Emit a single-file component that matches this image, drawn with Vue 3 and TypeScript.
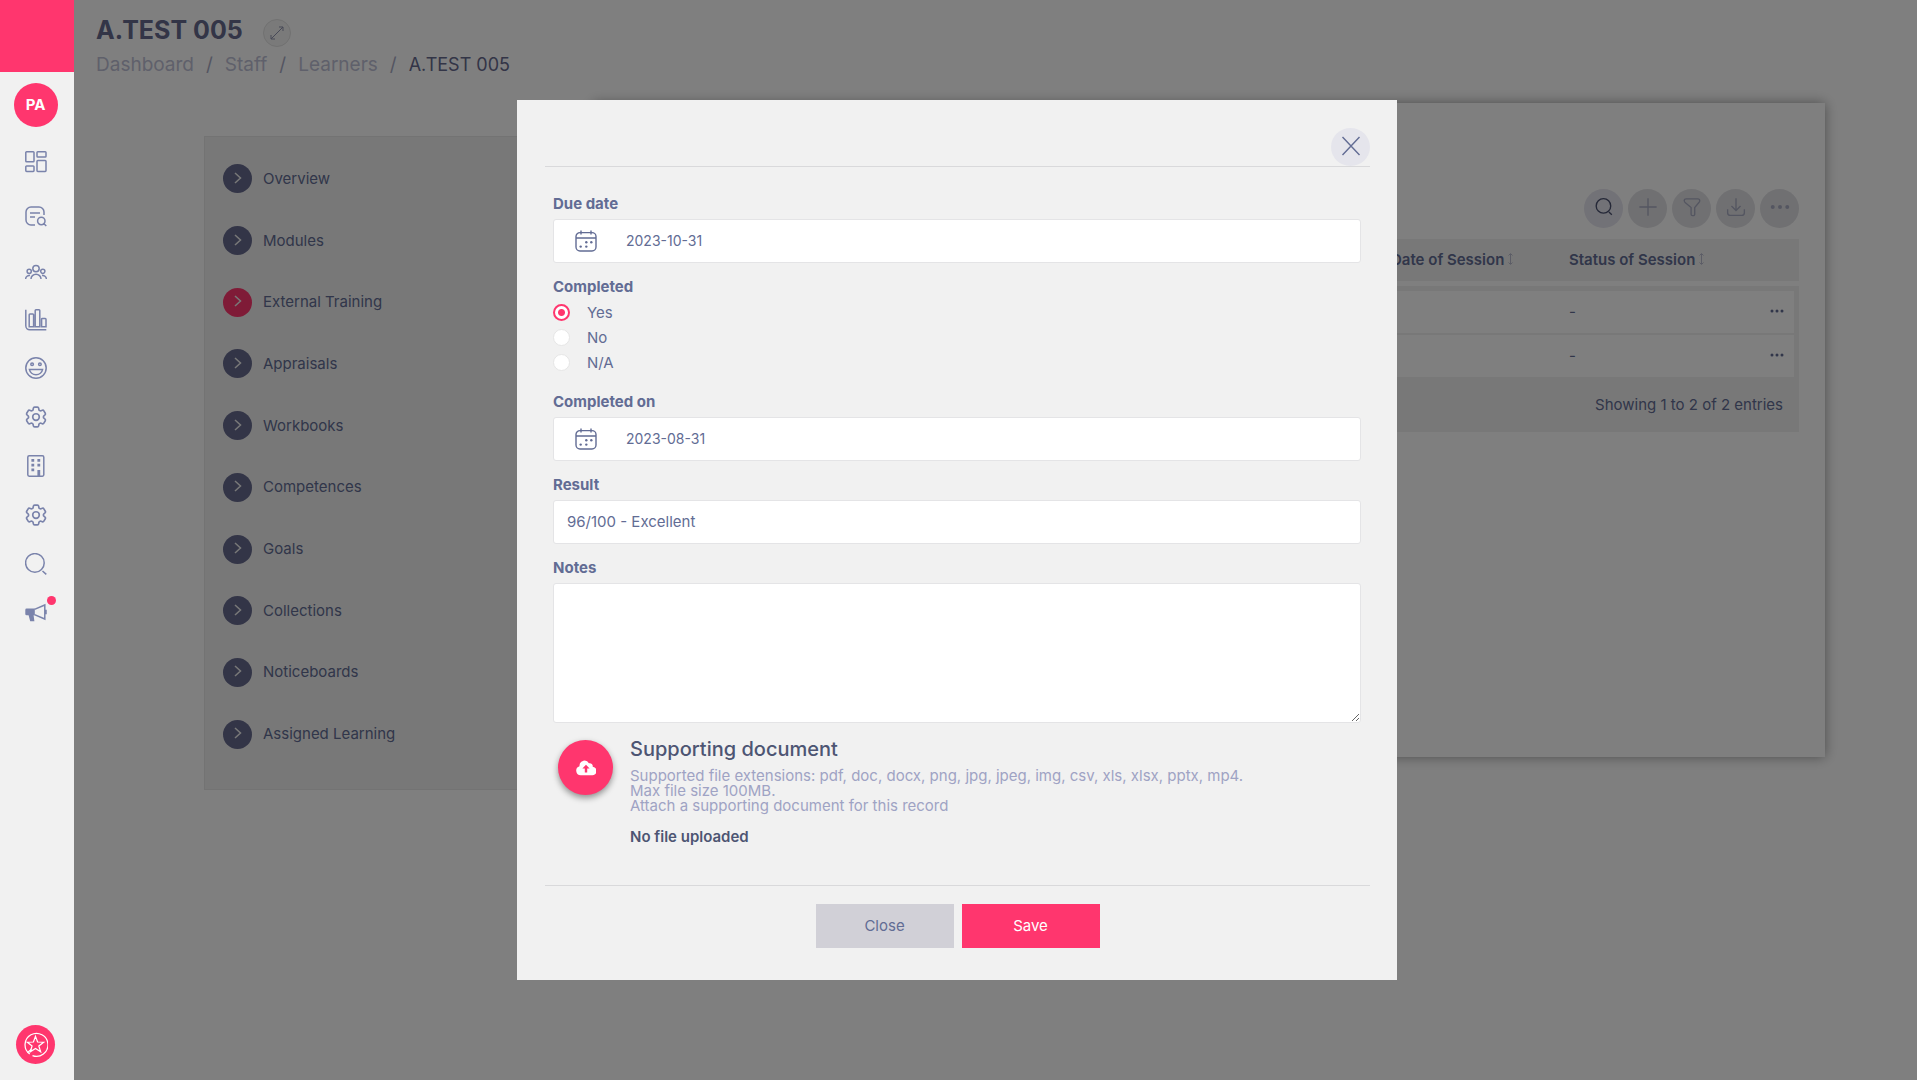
<script setup lang="ts">
import { ref } from 'vue'

interface NavIcon {
  name: string
  box: string
  strokes: string
  fills?: string
  spaced?: boolean
}

const gear =
  'M9.594 3.94c.09-.542.56-.94 1.11-.94h2.593c.55 0 1.02.398 1.11.94l.213 1.281c.063.374.313.686.645.87.074.04.147.083.22.127.325.196.72.257 1.075.124l1.217-.456a1.125 1.125 0 0 1 1.37.49l1.296 2.247a1.125 1.125 0 0 1-.26 1.431l-1.003.827c-.293.241-.438.613-.43.992a7.723 7.723 0 0 1 0 .255c-.008.378.137.75.43.991l1.004.827c.424.35.534.955.26 1.43l-1.298 2.247a1.125 1.125 0 0 1-1.369.491l-1.217-.456c-.355-.133-.75-.072-1.076.124a6.47 6.47 0 0 1-.22.128c-.331.183-.581.495-.644.869l-.213 1.281c-.09.543-.56.94-1.11.94h-2.594c-.55 0-1.019-.398-1.11-.94l-.213-1.281c-.062-.374-.312-.686-.644-.87a6.52 6.52 0 0 1-.22-.127c-.325-.196-.72-.257-1.076-.124l-1.217.456a1.125 1.125 0 0 1-1.369-.49l-1.297-2.247a1.125 1.125 0 0 1 .26-1.431l1.004-.827c.292-.24.437-.613.43-.991a6.932 6.932 0 0 1 0-.255c.007-.38-.138-.751-.43-.992l-1.004-.827a1.125 1.125 0 0 1-.26-1.43l1.297-2.247a1.125 1.125 0 0 1 1.37-.491l1.216.456c.356.133.751.072 1.076-.124.072-.044.146-.086.22-.128.332-.183.582-.495.644-.869l.214-1.28Z M15 12a3 3 0 1 1-6 0 3 3 0 0 1 6 0Z'

const navIcons: NavIcon[] = [
  {
    name: 'dashboard',
    box: '0 0 22 22',
    spaced: true,
    strokes:
      'M1.6.8h6.6a.8.8 0 0 1 .8.8v8.4a.8.8 0 0 1-.8.8H1.6a.8.8 0 0 1-.8-.8V1.6a.8.8 0 0 1 .8-.8Z M12.8.8h7.4a.8.8 0 0 1 .8.8v3.6a.8.8 0 0 1-.8.8h-7.4a.8.8 0 0 1-.8-.8V1.6a.8.8 0 0 1 .8-.8Z M1.6 15h6.6a.8.8 0 0 1 .8.8v3.8a.8.8 0 0 1-.8.8H1.6a.8.8 0 0 1-.8-.8v-3.8a.8.8 0 0 1 .8-.8Z M12.8 9.4h7.4a.8.8 0 0 1 .8.8v9.4a.8.8 0 0 1-.8.8h-7.4a.8.8 0 0 1-.8-.8v-9.4a.8.8 0 0 1 .8-.8Z'
  },
  {
    name: 'audit',
    box: '0 0 22 22',
    spaced: true,
    strokes:
      'M19 9V6a5 5 0 0 0-5-5H6a5 5 0 0 0-5 5v8a5 5 0 0 0 5 5h4 M5 7h10 M5 11h5 M20 15a3.700 3.700 0 1 1-7.400 0 3.700 3.700 0 0 1 7.400 0Z M19 17.700l2.300 2.300'
  },
  {
    name: 'people',
    box: '0 0 22 22',
    strokes:
      'M14.2 7.6a3.2 3.2 0 1 1-6.4 0 3.2 3.2 0 0 1 6.4 0Z M6.3 10.3a2.1 2.1 0 1 1-4.2 0 2.1 2.1 0 0 1 4.2 0Z M19.9 10.3a2.1 2.1 0 1 1-4.2 0 2.1 2.1 0 0 1 4.2 0Z M6 18a5 4.8 0 0 1 10 0 M.6 18a3.6 3.6 0 0 1 4.4-3.4 M21.4 18a3.6 3.6 0 0 0-4.4-3.4'
  },
  {
    name: 'reports',
    box: '0 0 22 22',
    strokes:
      'M.8.8v16a4 4 0 0 0 4 4h16.5 M5 5h2.8a.8.8 0 0 1 .8.8v12H4.2v-12a.8.8 0 0 1 .8-.8Z M11 .8h3a.8.8 0 0 1 .8.8v16.2h-4.6V1.6a.8.8 0 0 1 .8-.8Z M17.4 9.4h2.8a.8.8 0 0 1 .8.8v7.600h-4.400v-7.600a.8.8 0 0 1 .8-.8Z'
  },
  {
    name: 'feedback',
    box: '0 0 22 22',
    strokes:
      'M21.2 11a10.2 10.2 0 1 1-20.4 0 10.2 10.2 0 0 1 20.4 0Z M8.4 7.2a1.3 1.3 0 1 1-2.6 0 1.3 1.3 0 0 1 2.6 0Z M16.2 7.2a1.3 1.3 0 1 1-2.6 0 1.3 1.3 0 0 1 2.6 0Z M4.400 12.400h13.200a6.700 6.400 0 0 1-13.200 0Z'
  },
  { name: 'settings', box: '2 2 20 20', strokes: gear },
  {
    name: 'organisation',
    box: '0 0 22 22',
    strokes: 'M4.2.8h13.2a1.4 1.4 0 0 1 1.4 1.4v17.6a1.4 1.4 0 0 1-1.4 1.4H4.2a1.4 1.4 0 0 1-1.4-1.4V2.2A1.4 1.4 0 0 1 4.2.8Z',
    fills:
      'M6.4 4h2.800v2.800H6.400Z M12.400 4h2.800v2.800h-2.800Z M6.400 8.700h2.800v2.800H6.400Z M12.400 8.700h2.800v2.800h-2.800Z M6.400 13.400h2.800v2.800H6.400Z M12.400 15h2.800v6h-2.800Z'
  },
  { name: 'configuration', box: '2 2 20 20', strokes: gear },
  {
    name: 'search',
    box: '0 0 22 22',
    strokes: 'M19.2 9.9a9.3 9.3 0 1 1-18.6 0 9.3 9.3 0 0 1 18.6 0Z M17.5 18l3.8 3.4'
  },
  {
    name: 'announcements',
    box: '0 0 22 22',
    strokes: 'M9.5 7.4 19.8 3v14L9.5 12.6 M20 8.6v2.8h1v-2.8Z',
    fills: 'M1.6 6.6h8.2v6.6H8.6l.8 6H5.2l-1.6-6h-2a1.3 1.3 0 0 1-1.3-1.3v-4a1.3 1.3 0 0 1 1.3-1.3Z'
  }
]

const crumbs = ['Dashboard', 'Staff', 'Learners']

const sections = [
  'Overview',
  'Modules',
  'External Training',
  'Appraisals',
  'Workbooks',
  'Competences',
  'Goals',
  'Collections',
  'Noticeboards',
  'Assigned Learning'
]
const activeSection = ref('External Training')

const tools = [
  { name: 'Search', path: 'M18.4 9.8a8 8 0 1 1-16 0 8 8 0 0 1 16 0Z M16.4 16.4l3.200 3' },
  { name: 'Add', path: 'M11 1.500v19 M1.500 11h19' },
  {
    name: 'Filter',
    path: 'M4.500 2h13a2 2 0 0 1 2 2c0 .8-.3 1.400-.9 2L14 11.500v7.500a1.500 1.500 0 0 1-1.500 1.500h-1A1.500 1.500 0 0 1 10 19V11.500L3.400 6a2.500 2.500 0 0 1-.9-2 2 2 0 0 1 2-2Z'
  },
  { name: 'Download', path: 'M11 1.500v13 M6 9.800l5 5 5-5 M1.800 13.500v3.700a3 3 0 0 0 3 3h12.400a3 3 0 0 0 3-3v-3.700' },
  { name: 'More', path: '' }
]

const rows = ['-', '-']

const dueDate = ref('2023-10-31')
const completed = ref('Yes')
const completedOn = ref('2023-08-31')
const result = ref('96/100 - Excellent')
const notes = ref('')
const calendar =
  'M5 2.6h12a4 4 0 0 1 4 4v10.400a4 4 0 0 1-4 4H5a4 4 0 0 1-4-4V6.600a4 4 0 0 1 4-4Z M1 8h20 M6 .6v4 M16 .6v4'
const calendarDots = [
  [11.3, 12.3],
  [16.3, 12.3],
  [5.7, 16.6],
  [11.3, 16.6]
]
</script>

<template>
  <div class="app">
    <aside class="sidebar">
      <div class="brand"></div>
      <a href="#" class="avatar">PA</a>
      <nav>
        <ul class="nav-list">
          <li v-for="icon in navIcons" :key="icon.name" :class="{ spaced: icon.spaced }">
            <a href="#" class="nav-link" :aria-label="icon.name">
              <svg width="22" height="22" :viewBox="icon.box">
                <path :d="icon.strokes" fill="none" stroke="currentColor" stroke-width="1.5" />
                <path v-if="icon.fills" :d="icon.fills" fill="currentColor" />
              </svg>
              <span v-if="icon.name === 'announcements'" class="dot"></span>
            </a>
          </li>
        </ul>
      </nav>
      <button type="button" class="star" aria-label="favourites">
        <svg width="25" height="25" viewBox="0 0 24 24" fill="none" stroke="currentColor" stroke-width="1.2">
          <path d="M6.500 21.200a11 11 0 1 1 2.600 1.400" />
          <path d="M12 4.200l2 5.400 5.800.2-4.600 3.600 1.700 5.600-4.900-3.200-5 3.200 1.700-5.600-4.500-3.600 5.800-.2Z" />
          <path d="M4.500 19.700 8 16.600" />
        </svg>
      </button>
    </aside>

    <main class="page">
      <header class="page-head">
        <div class="title-row">
          <h1>A.TEST 005</h1>
          <button type="button" class="expand" aria-label="expand">
            <svg width="14" height="14" viewBox="0 0 14 14" fill="none" stroke="currentColor">
              <path d="M1 13 13 1M9 1h4v4M5 13H1V9" />
            </svg>
          </button>
        </div>
        <nav class="crumbs">
          <template v-for="crumb in crumbs" :key="crumb">
            <a href="#">{{ crumb }}</a>
            <span class="slash">/</span>
          </template>
          <span class="current">A.TEST 005</span>
        </nav>
      </header>

      <div class="columns">
        <ul class="sections">
          <li v-for="section in sections" :key="section">
            <a href="#" :class="{ active: section === activeSection }">
              <span class="bullet">
                <svg width="8" height="12" viewBox="0 0 8 12" fill="none" stroke="currentColor" stroke-width="1.5">
                  <path d="M1 1l5.500 5L1 11" />
                </svg>
              </span>
              {{ section }}
            </a>
          </li>
        </ul>

        <section class="card">
          <div class="toolbar">
            <button v-for="tool in tools" :key="tool.name" type="button" :aria-label="tool.name">
              <svg width="20" height="20" viewBox="0 0 22 22" fill="none" stroke="currentColor" stroke-width="1.5">
                <path v-if="tool.path" :d="tool.path" />
                <g v-else fill="currentColor" stroke="none">
                  <circle cx="3" cy="11" r="2.2" />
                  <circle cx="11" cy="11" r="2.2" />
                  <circle cx="19" cy="11" r="2.2" />
                </g>
              </svg>
            </button>
          </div>
          <table>
            <colgroup>
              <col />
              <col class="col-date" />
              <col class="col-status" />
              <col class="col-menu" />
            </colgroup>
            <thead>
              <tr>
                <td></td>
                <th v-for="heading in ['Date of Session', 'Status of Session']" :key="heading" scope="col">
                  {{ heading }}
                  <svg class="sort" width="5" height="12" viewBox="0 0 5 12" fill="none" stroke="currentColor">
                    <path d="M2.500 1v10M.5 2.500l2-2 2 2M.5 9.500l2 2 2-2" />
                  </svg>
                </th>
                <td></td>
              </tr>
            </thead>
            <tbody>
              <tr v-for="(status, index) in rows" :key="index">
                <td></td>
                <td></td>
                <td>{{ status }}</td>
                <td class="menu-cell">
                  <button type="button" class="row-menu" aria-label="row menu">
                    <svg width="14" height="4" viewBox="0 0 14 4" fill="currentColor">
                      <circle cx="2" cy="2" r="1.5" />
                      <circle cx="7" cy="2" r="1.5" />
                      <circle cx="12" cy="2" r="1.5" />
                    </svg>
                  </button>
                </td>
              </tr>
            </tbody>
          </table>
          <p class="table-foot">Showing 1 to 2 of 2 entries</p>
        </section>
      </div>
    </main>

    <div class="backdrop">
      <form class="modal" role="dialog" @submit.prevent>
        <header class="modal-head">
          <button type="button" class="dismiss" aria-label="dismiss">
            <svg width="20" height="20" viewBox="0 0 20 20" fill="none" stroke="currentColor" stroke-width="1.4">
              <path d="M1.500 1l17 18M18.500 1l-17 18" />
            </svg>
          </button>
        </header>

        <div class="modal-body">
          <div class="field">
            <label for="due-date">Due date</label>
            <div class="control date">
              <svg width="22" height="22" viewBox="0 0 22 22">
                <path :d="calendar" fill="none" stroke="currentColor" stroke-width="1.4" />
                <circle v-for="(d, i) in calendarDots" :key="i" :cx="d[0]" :cy="d[1]" r="1.2" fill="currentColor" />
              </svg>
              <input id="due-date" v-model="dueDate" type="text" />
            </div>
          </div>

          <fieldset class="field">
            <legend>Completed</legend>
            <label v-for="option in ['Yes', 'No', 'N/A']" :key="option" class="option">
              <input v-model="completed" type="radio" name="completed" :value="option" />
              <span>{{ option }}</span>
            </label>
          </fieldset>

          <div class="field">
            <label for="completed-on">Completed on</label>
            <div class="control date">
              <svg width="22" height="22" viewBox="0 0 22 22">
                <path :d="calendar" fill="none" stroke="currentColor" stroke-width="1.4" />
                <circle v-for="(d, i) in calendarDots" :key="i" :cx="d[0]" :cy="d[1]" r="1.2" fill="currentColor" />
              </svg>
              <input id="completed-on" v-model="completedOn" type="text" />
            </div>
          </div>

          <div class="field">
            <label for="result">Result</label>
            <div class="control">
              <input id="result" v-model="result" type="text" />
            </div>
          </div>

          <div class="field">
            <label for="notes">Notes</label>
            <textarea id="notes" v-model="notes"></textarea>
          </div>

          <div class="upload">
            <button type="button" class="upload-button" aria-label="upload">
              <svg width="20" height="16" viewBox="0 0 20 16">
                <path d="M16.700 6.800a3 3 0 0 0-3.800-3.500A5 5 0 0 0 3.500 5.500v.7A4.600 4.600 0 0 0 4.700 15.200H16a4.200 4.200 0 0 0 .7-8.400Z" fill="currentColor" />
                <path class="arrow" d="M10 4.800l3.600 3.800h-2.400v3.900H8.800V8.600H6.400Z" />
              </svg>
            </button>
            <div>
              <h2>Supporting document</h2>
              <p class="hint">
                Supported file extensions: pdf, doc, docx, png, jpg, jpeg, img, csv, xls, xlsx, pptx, mp4.<br />
                Max file size 100MB.<br />
                Attach a supporting document for this record
              </p>
              <p class="status">No file uploaded</p>
            </div>
          </div>
        </div>

        <footer class="modal-foot">
          <button type="button" class="close">Close</button>
          <button type="submit" class="save">Save</button>
        </footer>
      </form>
    </div>
  </div>
</template>

<style>
body {
  margin: 0;
  background: #fff;
}
</style>

<style scoped>
* {
  box-sizing: border-box;
}

.app {
  display: flex;
  min-height: 100vh;
  color: #626c94;
  font-family: Inter, "Open Sans", sans-serif;
  font-size: 15px;
  line-height: 20px;
}

button,
input,
textarea {
  font: inherit;
  color: inherit;
}

button {
  display: flex;
  align-items: center;
  justify-content: center;
  padding: 0;
  border: 0;
  cursor: pointer;
}

a {
  color: inherit;
  text-decoration: none;
}

ul {
  margin: 0;
  padding: 0;
  list-style: none;
}

svg {
  display: block;
  flex: none;
}

/* Sidebar */
.sidebar {
  position: relative;
  z-index: 2;
  display: flex;
  flex-direction: column;
  align-items: center;
  flex: none;
  width: 74px;
  padding: 0 3px 16px 0;
  background: #f1f1f1;
}

.brand {
  align-self: stretch;
  height: 72px;
  margin-right: -3px;
  background: #ff366e;
}

.avatar {
  display: flex;
  align-items: center;
  justify-content: center;
  width: 44px;
  height: 44px;
  margin: 11px 0;
  border-radius: 50%;
  background: #ff366e;
  color: #fff;
  font-weight: 700;
}

.nav-list li {
  height: 48px;
}

.nav-list li:nth-child(n + 6) {
  height: 49px;
}

.nav-list .spaced {
  margin-bottom: 7px;
}

.nav-link {
  position: relative;
  display: flex;
  align-items: center;
  justify-content: center;
  width: 44px;
  height: 100%;
  color: #7a83ab;
}

.dot {
  position: absolute;
  top: 8px;
  right: 2px;
  width: 9px;
  height: 9px;
  border-radius: 50%;
  background: #ff366e;
}

.star {
  width: 39px;
  height: 39px;
  margin-top: auto;
  border-radius: 50%;
  background: #ff366e;
  color: #fff;
}

/* Page */
.page {
  flex: 1;
  min-width: 0;
}

.page-head {
  height: 103px;
  padding: 13px 22px 0;
}

.title-row {
  display: flex;
  align-items: center;
  gap: 20px;
  height: 34px;
}

h1 {
  margin: 0;
  color: #666a8e;
  font-size: 25px;
  line-height: 32px;
  font-weight: 700;
}

.expand {
  width: 28px;
  height: 28px;
  margin-top: 6px;
  border: 1px solid #e2e2e2;
  border-radius: 50%;
  background: #f4f4f4;
  color: #8f93ae;
}

.crumbs {
  display: flex;
  gap: 12px;
  margin-top: 6px;
  color: #bfc1d6;
  font-size: 19px;
  line-height: 24px;
}

.slash {
  color: #a8abc4;
}

.current {
  color: #666a8e;
  font-size: 18px;
}

.columns {
  display: flex;
  align-items: flex-start;
  padding: 0 92px 0 130px;
}

.sections {
  display: flex;
  flex-direction: column;
  flex: 0 0 24%;
  height: 654px;
  margin-top: 33px;
  padding: 11px 18px 24px;
  border: 1px solid #e6e6e6;
  background: #f1f1f1;
}

.sections li {
  display: flex;
  align-items: center;
  flex: 1;
}

.sections a {
  display: flex;
  align-items: center;
  gap: 11px;
}

.bullet {
  display: flex;
  align-items: center;
  justify-content: center;
  width: 29px;
  height: 29px;
  padding-bottom: 2px;
  border-radius: 50%;
  background: #666a8e;
  color: #f1f1f1;
}

.active .bullet {
  background: #ff366e;
}

.card {
  position: relative;
  flex: 1;
  min-width: 0;
  min-height: 654px;
  padding: 86px 26px 0;
  background: #fff;
  box-shadow: 0 0 12px rgba(0, 0, 0, 0.4);
}

.toolbar {
  display: flex;
  justify-content: flex-end;
  gap: 5px;
  margin-bottom: 11px;
}

.toolbar button {
  width: 39px;
  height: 39px;
  padding-bottom: 3px;
  border-radius: 50%;
  background: #e1e1e5;
  color: #a9acc2;
}

.toolbar button:first-child {
  background: #e5e4ee;
  color: #4a5170;
}

table {
  width: 100%;
  table-layout: fixed;
  border-collapse: separate;
  border-spacing: 0;
}

.col-date {
  width: 178px;
}

.col-status {
  width: 160px;
}

.col-menu {
  width: 80px;
}

th,
td {
  padding: 0 10px;
  text-align: left;
  white-space: nowrap;
}

thead th,
thead td {
  height: 47px;
  border-bottom: 5px solid #fff;
  background: #f1f1f1;
  font-weight: 600;
}

.sort {
  display: inline-block;
  color: #b9bbcd;
}

tbody td {
  height: 44px;
  border-top: 2px solid #f1f1f1;
}

tbody tr:first-child td {
  height: 47px;
  border-top-width: 5px;
}

tbody td:last-child {
  border-right: 5px solid #f1f1f1;
}

.row-menu {
  margin-left: auto;
  padding-bottom: 2px;
  background: none;
}

.table-foot {
  margin: 0;
  padding: 18px 16px 17px;
  background: #f1f1f1;
  text-align: right;
}

/* Modal */
.backdrop {
  position: fixed;
  inset: 0;
  z-index: 1;
  display: flex;
  align-items: center;
  justify-content: center;
  padding-right: 3px;
  background: rgba(0, 0, 0, 0.5);
}

.modal {
  width: 880px;
  max-width: 100%;
  padding: 28px 27px 32px 28px;
  background: #f1f1f1;
}

.modal-head {
  display: flex;
  justify-content: flex-end;
  border-bottom: 1px solid #d9d9db;
}

.dismiss {
  width: 39px;
  height: 38px;
  padding-bottom: 2px;
  border-radius: 50%;
  background: #e5e5ec;
}

.modal-body {
  padding: 27px 9px 0 8px;
}

.field {
  margin: 0 0 14px;
  padding: 0;
  border: 0;
}

.field > label,
.field legend {
  display: block;
  margin-bottom: 5px;
  padding: 0;
  font-weight: 700;
}

.field legend {
  margin-bottom: 3px;
}

fieldset.field {
  margin-bottom: 17px;
}

.field > .option {
  display: flex;
  align-items: center;
  gap: 17px;
  height: 25px;
  margin: 0;
  font-weight: 400;
}

.option input {
  width: 17px;
  height: 17px;
  margin: 0;
  appearance: none;
  border: 1px solid #e6e6e6;
  border-radius: 50%;
  background: #fff;
}

.option input:checked {
  border: 2px solid #ff366e;
  background: radial-gradient(circle, #ff366e 0 3px, #fff 4px);
}

.control {
  display: flex;
  align-items: center;
  height: 44px;
  padding: 0 13px;
  border: 1px solid #e4e4e6;
  border-radius: 3px;
  background: #fff;
}

.control.date {
  gap: 29px;
  padding: 0 21px;
  font-size: 14px;
}

.control input {
  flex: 1;
  min-width: 0;
  padding: 0;
  border: 0;
  outline: 0;
  background: none;
}

textarea {
  display: block;
  width: 100%;
  height: 140px;
  padding: 10px 13px;
  border: 1px solid #e4e4e6;
  border-radius: 3px;
  outline: 0;
  background: #fff;
  resize: vertical;
}

.upload {
  display: flex;
  align-items: flex-start;
  gap: 17px;
  padding: 3px 0 0 5px;
}

.upload-button {
  flex: none;
  width: 55px;
  height: 55px;
  border-radius: 50%;
  background: #ff366e;
  box-shadow: 0 3px 6px rgba(0, 0, 0, 0.4);
  color: #fff;
}

.arrow {
  fill: #ff366e;
}

h2 {
  margin: 0;
  color: #4d5573;
  font-size: 20px;
  line-height: 18px;
  font-weight: 500;
}

.hint {
  margin: 10px 0 0;
  color: #9fa3c4;
  line-height: 15px;
}

.status {
  margin: 14px 0 0;
  color: #4d5573;
  font-weight: 600;
}

.modal-foot {
  display: flex;
  justify-content: center;
  gap: 8px;
  margin-top: 38px;
  padding-top: 18px;
  border-top: 1px solid #d9d9db;
}

.modal-foot button {
  width: 138px;
  height: 44px;
}

.close {
  background: #d1d0d7;
}

.save {
  background: #ff366e;
  color: #fff;
}
</style>
